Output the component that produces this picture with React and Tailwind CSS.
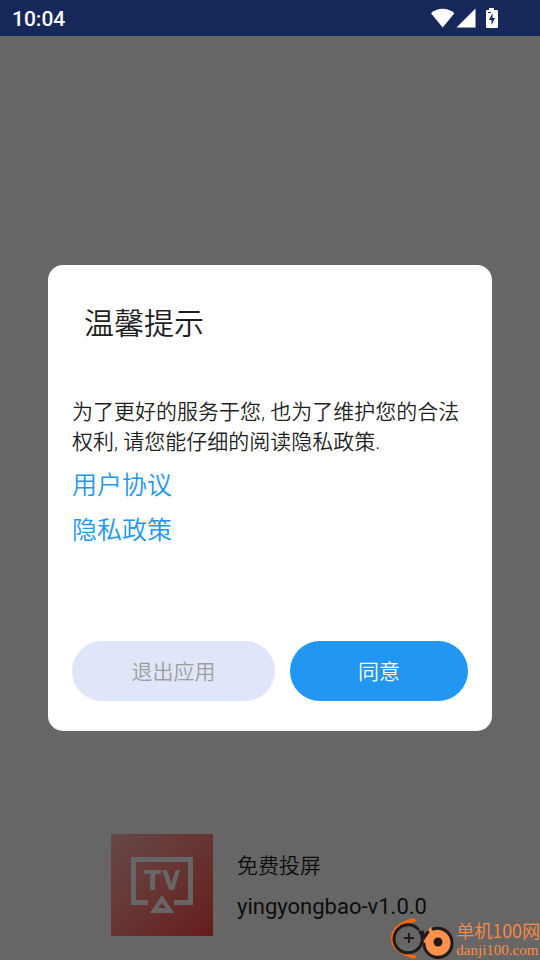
import React from "react";

function StatusBar() {
  return (
    <header className="flex h-9 shrink-0 items-center justify-between bg-[#16275a] pl-3 pr-[41px] text-white">
      <time className="pt-px font-['Roboto'] text-[21px] leading-6 font-medium">10:04</time>
      <div className="flex items-center pb-px">
        <svg className="h-5 w-6" viewBox="0 0 24 20" fill="currentColor" aria-label="Wi-Fi">
          <path d="M0 5.2C3.2 2.4 7.3.7 11.7.7S20.200 2.400 23.400 5.200L11.700 19.500Z" />
        </svg>
        <svg className="ml-px h-5 w-5" viewBox="0 0 20 20" fill="currentColor" aria-label="Signal">
          <path d="M19.500.5V19.500H.5Z" />
        </svg>
        <svg className="ml-[9px] h-5 w-[14px]" viewBox="0 0 14 20" aria-label="Charging">
          <path fill="currentColor" d="M4 0h5v2h3a1 1 0 0 1 1 1v16a1 1 0 0 1-1 1H2a1 1 0 0 1-1-1V3a1 1 0 0 1 1-1h2Z" />
          <path fill="#16275a" d="M7.500 5v5H10L6.500 17v-5H4ZM3 4h3v1H3Z" />
        </svg>
      </div>
    </header>
  );
}

function AppIcon() {
  return (
    <div className="size-[102px] bg-linear-to-br from-[#ffb4b4] to-[#ff4444]">
      <svg className="size-full" viewBox="0 0 102 102" fill="none" aria-label="TV">
        <path d="M37 68.500H22.500V25.500H79.500V68.500H63" stroke="#fff" strokeWidth="5" />
        <path d="M33 36H50V40H44V56H39V40H33ZM51 36H56L60.500 50 64.500 36H69L63 56H58Z" fill="#fff" />
        <path fillRule="evenodd" d="M51 61L63 79H39ZM51 69L47 74H55Z" fill="#fff" />
      </svg>
    </div>
  );
}

function Splash() {
  return (
    <footer className="flex items-center justify-center gap-6 pb-6">
      <AppIcon />
      <div className="flex flex-col gap-[11px] pt-[3px] pr-[2px] leading-[30px]">
        <p className="text-[21px]">免费投屏</p>
        <p className="text-[22px] font-normal">yingyongbao-v1.0.0</p>
      </div>
    </footer>
  );
}

function ConsentDialog() {
  return (
    <section
      role="dialog"
      aria-labelledby="title"
      className="w-full rounded-[15px] bg-white px-6 pt-[37px] pb-[30px] text-[#1f1f1f]"
    >
      <h1 id="title" className="px-3 text-[30px] leading-[44px] font-[350]">温馨提示</h1>
      <p className="mt-[51px] text-[21px] leading-[30px]">
        为了更好的服务于您, 也为了维护您的合法权利, 请您能仔细的阅读隐私政策.
      </p>
      <nav className="mt-[6px] flex flex-col items-start text-[25px] leading-[45px] text-[#2196f3]">
        <a href="#terms">用户协议</a>
        <a href="#privacy">隐私政策</a>
      </nav>
      <div className="mt-[88px] flex gap-[15px] text-[21px]">
        <button type="button" className="h-[60px] grow rounded-full bg-[#dfe6fa] px-[59px] pt-[3px] whitespace-nowrap text-[#9e9e9e]">
          退出应用
        </button>
        <button type="button" className="h-[60px] w-[178px] rounded-full bg-[#2196f3] pt-[3px] text-white">
          同意
        </button>
      </div>
    </section>
  );
}

function Watermark() {
  return (
    <div className="absolute right-0 bottom-0 flex items-end text-[#ff8c42]">
      <svg className="h-[43px] w-[66px]" viewBox="0 0 66 43" fill="none" aria-hidden="true">
        <path d="M21 1.500C25 1 27 3 26 5C21 5 5 8 5 21S18 37 27 39C26 42 22 42 19 40C8 36 1 31 1 21S10 5 21 1.500Z" fill="#ff6a00" />
        <path d="M28 12A14 14 0 1 0 25 34C31 31 35 22 30 15" stroke="#231916" strokeWidth="3" strokeLinecap="round" />
        <path d="M14 21h10M19 16v10" stroke="#231916" strokeWidth="2" />
        <path d="M34 22C34 17 38 13 41 10L44 12.500C53 10 61 17 61 25A13.500 13.500 0 1 1 34 25Z" fill="#ff914d" />
        <path d="M32.500 15L34.500 20L38 15M43 12C54 9 62 17 62 26A14 14 0 0 1 34 27" stroke="#231916" strokeWidth="3" strokeLinecap="round" />
        <circle cx="48" cy="25" r="4.500" fill="#231916" />
      </svg>
      <div className="flex flex-col">
        <span className="font-['Noto_Sans_CJK_SC',sans-serif] text-[18px] leading-[20px]">单机100网</span>
        <span className="font-['Liberation_Serif',serif] text-[15px] leading-[20px] font-normal">danji100.com</span>
      </div>
    </div>
  );
}

export default function App() {
  return (
    <div className="relative flex min-h-screen flex-col bg-white font-['Roboto','Noto_Sans_CJK_SC',sans-serif] font-[350] text-[#1f1f1f]">
      <StatusBar />
      <main className="relative flex grow flex-col justify-end">
        <Splash />
        <div className="absolute inset-0 flex items-center justify-center bg-black/60 px-12">
          <ConsentDialog />
        </div>
      </main>
      <Watermark />
    </div>
  );
}
